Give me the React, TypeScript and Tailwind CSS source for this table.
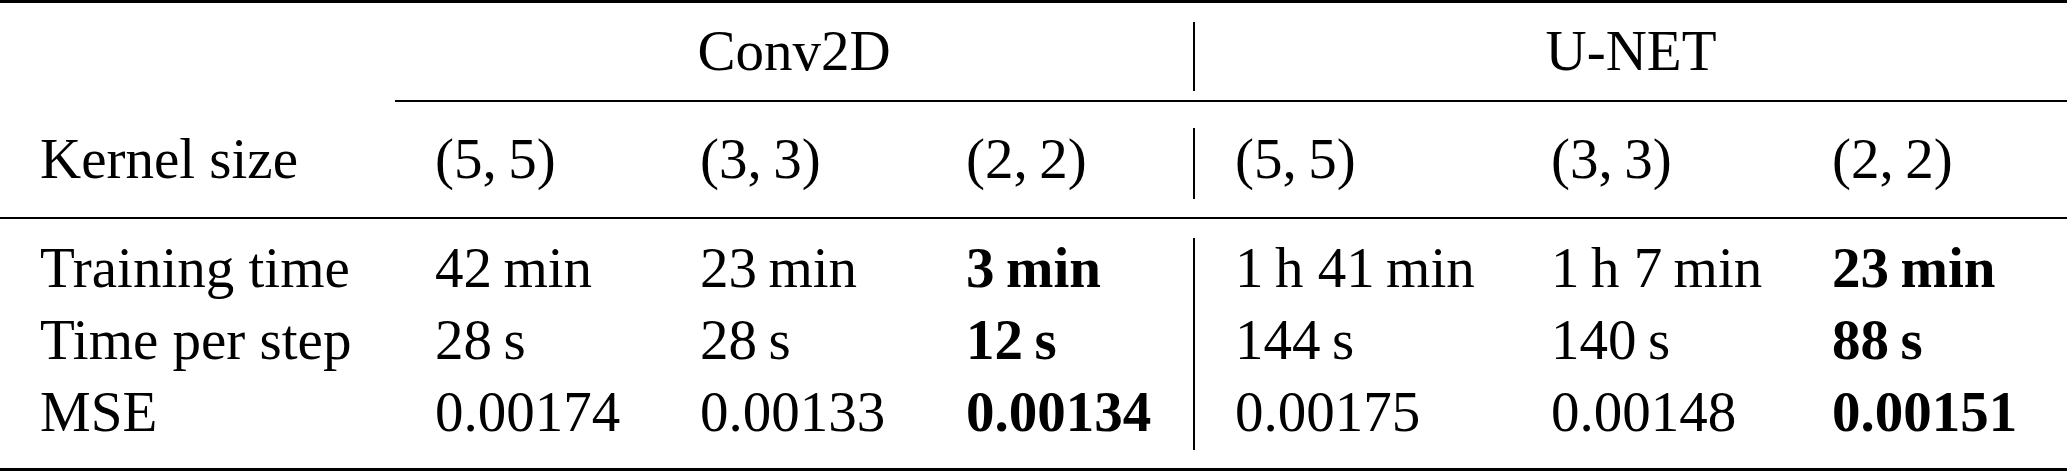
const grid = "grid grid-cols-[395px_265px_266px_267px_2px_316px_281px_275px]";

const kernels = ["(5,\u20095)", "(3,\u20093)", "(2,\u20092)"];

const rows = [
  {
    label: "Training time",
    conv: ["42\u2009min", "23\u2009min", "3\u2009min"],
    unet: ["1\u2009h 41\u2009min", "1\u2009h 7\u2009min", "23\u2009min"],
  },
  {
    label: "Time per step",
    conv: ["28\u2009s", "28\u2009s", "12\u2009s"],
    unet: ["144\u2009s", "140\u2009s", "88\u2009s"],
  },
  {
    label: "MSE",
    conv: ["0.00174", "0.00133", "0.00134"],
    unet: ["0.00175", "0.00148", "0.00151"],
  },
];

const best = 2;

const BodyColumn = ({ values }: { values: string[] }) => (
  <div className="pl-[40px] pt-[13px]">
    {values.map((v, i) => (
      <div key={i} className="whitespace-nowrap">
        {v}
      </div>
    ))}
  </div>
);

const BoldColumn = ({ values }: { values: string[] }) => (
  <div className="pl-[40px] pt-[13px] font-bold">
    {values.map((v, i) => (
      <div key={i} className="whitespace-nowrap">
        {v}
      </div>
    ))}
  </div>
);

const Column = ({ values, index }: { values: string[]; index: number }) =>
  index === best ? <BoldColumn values={values} /> : <BodyColumn values={values} />;

const App = () => {
  return (
    <div className="w-[2067px] h-[473px] bg-white text-black font-['Liberation_Serif',serif] text-[57px] leading-[72px]">
      <div className="h-[3px] bg-black" />

      {/* model header */}
      <div className={`${grid} h-[97px]`}>
        <div />
        <div className="col-span-3 pt-[12px] text-center">Conv2D</div>
        <div className="mt-[19px] mb-[9px] bg-black" />
        <div className="col-span-3 pt-[12px] text-center">U-NET</div>
      </div>

      <div className={`${grid} h-[2px]`}>
        <div />
        <div className="col-span-7 bg-black" />
      </div>

      {/* kernel sizes */}
      <div className={`${grid} h-[115px]`}>
        <div className="pl-[40px] pt-[21px] whitespace-nowrap">Kernel size</div>
        {kernels.map((k) => (
          <div key={`c${k}`} className="pl-[40px] pt-[21px] whitespace-nowrap">
            {k}
          </div>
        ))}
        <div className="mt-[26px] mb-[18px] bg-black" />
        {kernels.map((k) => (
          <div key={`u${k}`} className="pl-[40px] pt-[21px] whitespace-nowrap">
            {k}
          </div>
        ))}
      </div>

      <div className="h-[2px] bg-black" />

      {/* results */}
      <div className={`${grid} h-[249px]`}>
        <BodyColumn values={rows.map((r) => r.label)} />
        {[0, 1, 2].map((i) => (
          <Column key={`c${i}`} index={i} values={rows.map((r) => r.conv[i])} />
        ))}
        <div className="mt-[19px] mb-[18px] bg-black" />
        {[0, 1, 2].map((i) => (
          <Column key={`u${i}`} index={i} values={rows.map((r) => r.unet[i])} />
        ))}
      </div>

      <div className="h-[3px] bg-black" />
    </div>
  );
};

export default App;
